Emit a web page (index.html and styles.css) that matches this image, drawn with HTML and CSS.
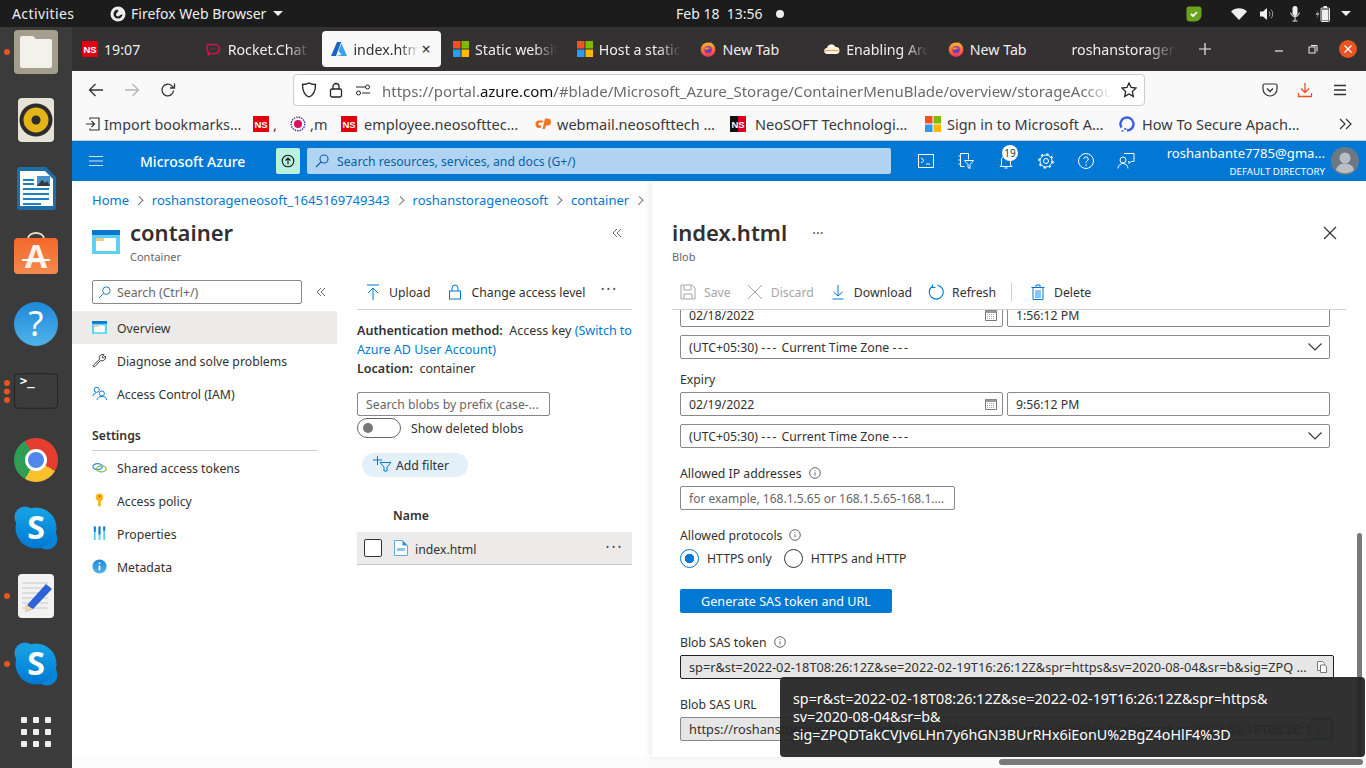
FILE: index.html
```html
<!DOCTYPE html>
<html>
<head>
  <meta charset="utf-8">
  <title>index.html - Microsoft Azure</title>
  <link rel="stylesheet" href="styles.css">
</head>
<body>
  <svg class="defs">
    <defs>
      <linearGradient id="fox" x1="0" y1="0" x2="0" y2="1"><stop offset="0" stop-color="#ffb52e"/><stop offset=".55" stop-color="#ff6a2f"/><stop offset="1" stop-color="#f0306e"/></linearGradient>
      <linearGradient id="skyblue" x1="0" y1="0" x2="0" y2="1"><stop offset="0" stop-color="#16a5e6"/><stop offset="1" stop-color="#0078d4"/></linearGradient>
      <linearGradient id="sky2" x1="0" y1="0" x2="0" y2="1"><stop offset="0" stop-color="#1e88d8"/><stop offset="1" stop-color="#50b4ea"/></linearGradient>
      <linearGradient id="store" x1="0" y1="0" x2="0" y2="1"><stop offset="0" stop-color="#f4672a"/><stop offset="1" stop-color="#f58a4e"/></linearGradient>
    </defs>
    <symbol id="ms" viewBox="0 0 16 16"><rect width="7.5" height="7.5" fill="#f25022"/><rect x="8.5" width="7.5" height="7.5" fill="#7fba00"/><rect y="8.5" width="7.5" height="7.5" fill="#2d9cf0"/><rect x="8.5" y="8.5" width="7.5" height="7.5" fill="#ffb900"/></symbol>
    <symbol id="firefox" viewBox="0 0 16 16"><circle cx="8" cy="8.700" r="7.300" fill="url(#fox)"/><path d="M9 .4c2.800 1.200 4.600 3.200 5.500 5.600-.8-1-2-1.800-3.200-2-.1-1.400-1-2.600-2.300-3.600z" fill="#ffa92e"/><circle cx="8.200" cy="8.600" r="3.700" fill="#6f3cc0"/><path d="M4.600 7.200c1.800-1.400 4.700-1.300 6.600.6-1.300-.4-2.800-.2-3.500.7-.7.700-2.200.6-3.100-1.300z" fill="#ff8a2f"/></symbol>
    <symbol id="ns" viewBox="0 0 16 16"><rect width="16" height="16" fill="#e3000f"/><text x="8" y="12" class="ns-text">NS</text></symbol>
    <symbol id="skype" viewBox="0 0 44 44"><circle cx="11" cy="11" r="10.500" fill="#1a9be0"/><circle cx="33" cy="33" r="10.500" fill="#0a84d6"/><circle cx="22" cy="22" r="20.500" fill="url(#skyblue)"/><text x="22" y="33" class="skype-text">S</text></symbol>
    <symbol id="info" viewBox="0 0 12 12"><circle cx="6" cy="6" r="5.300" fill="none" stroke="#666"/><path d="M6 5.300v3.200M6 3.200v1" stroke="#666"/></symbol>
    <symbol id="cal" viewBox="0 0 14 14"><path d="M1.500 2.500h11v10h-11z" fill="#fff" stroke="#777"/><path d="M1.500 2.500h11v2.500h-11z" fill="#999"/><path d="M3 6.500h8M3 8.500h8M3 10.500h8" stroke="#aaa" stroke-dasharray="1 1"/></symbol>
    <symbol id="chev" viewBox="0 0 16 10"><path d="M1.500 1.500 8 8l6.500-6.500" fill="none" stroke="#333" stroke-width="1.100"/></symbol>
    <symbol id="copy" viewBox="0 0 14 14"><path d="M2.500 1.500h5l2 2v7h-7z" fill="#fff" stroke="#777"/><path d="M5.500 5h4.500l1.500 1.500v6h-6z" fill="#fff" stroke="#777"/></symbol>
    <symbol id="pane" viewBox="0 0 28 24"><rect width="28" height="24" fill="#5ed0f2"/><rect width="28" height="5" fill="#0a78d0"/><rect x="4" y="8" width="20" height="13" fill="#fff"/><rect x="4" y="8" width="8" height="3" fill="#f7c77e"/></symbol>
  </svg>

  <header class="topbar">
    <div class="top-left">
      <span class="activities">Activities</span>
      <svg class="top-ff" viewBox="0 0 16 16"><circle cx="8" cy="8" r="7.500" fill="#eee"/><path d="M8 3.500a4.500 4.500 0 1 0 4.500 4.500c-1 1-3 1.500-4.500.5s-.5-3 1-3.500c-1-.5-2-.8-1-1.500z" fill="#1b1b1b"/><circle cx="8" cy="8.500" r="2" fill="#eee"/></svg>
      <span>Firefox Web Browser</span>
      <span class="caret"></span>
    </div>
    <div class="top-clock">
      <span>Feb 18&nbsp; 13:56</span>
      <span class="clock-dot"></span>
    </div>
    <div class="top-tray">
      <svg class="tray-shield" viewBox="0 0 16 16"><path d="M3 .5h10a2.500 2.500 0 0 1 2.500 2.500v6c0 3.500-3 6.500-6.500 6.500H4A3.500 3.500 0 0 1 .5 12V3A2.500 2.500 0 0 1 3 .5z" fill="#6aa31d"/><path d="M5 8l2.200 2L11 6" stroke="#fff" stroke-width="1.800" fill="none"/></svg>
      <svg class="tray-wifi" viewBox="0 0 16 12"><path d="M0 3.500C4.500-.8 11.500-.8 16 3.500L8 12z" fill="#eee"/></svg>
      <svg class="tray-sound" viewBox="0 0 15 14"><path d="M0 4.500h3L7 1v12L3 9.500H0z" fill="#eee"/><path d="M9 4.500a3.500 3.500 0 0 1 0 5M11 2.500a6.500 6.500 0 0 1 0 9" stroke="#999" fill="none"/></svg>
      <svg class="tray-mic" viewBox="0 0 10 16"><rect x="2.500" y="0" width="5" height="10" rx="2.500" fill="#eee"/><path d="M.8 6.500a4.200 4.200 0 0 0 8.400 0M5 11v3.500M2.500 15h5" stroke="#eee" fill="none"/></svg>
      <svg class="tray-batt" viewBox="0 0 15 16"><path d="M3 4 .5 9h2L1.500 13 4.500 7h-2z" fill="#999"/><rect x="6" y="2" width="8.500" height="13.500" rx="1" fill="none" stroke="#eee"/><rect x="8.500" y="0" width="3.500" height="2" fill="#eee"/><rect x="7" y="3.500" width="6.500" height="11" fill="#eee"/></svg>
      <span class="caret"></span>
    </div>
  </header>

  <div class="desktop">
    <nav class="dock">
      <div class="dock-slot"><span class="run-dot"></span>
        <svg class="dock-icon" viewBox="0 0 44 44"><rect width="44" height="44" rx="4" fill="#a39e8e"/><path d="M6 8a2 2 0 0 1 2-2h11l3 3h14a2 2 0 0 1 2 2v25a2 2 0 0 1-2 2H8a2 2 0 0 1-2-2z" fill="#f3f1ec"/></svg>
      </div>
      <div class="dock-slot">
        <svg class="dock-icon" viewBox="0 0 44 44"><rect x="4" width="36" height="44" rx="4" fill="#e6e2d4"/><circle cx="22" cy="22" r="16.500" fill="#2c2c30"/><circle cx="22" cy="22" r="12.500" fill="#e5b416"/><circle cx="22" cy="22" r="4.500" fill="#2c2c30"/></svg>
      </div>
      <div class="dock-slot">
        <svg class="dock-icon" viewBox="0 0 44 44"><path d="M3 4a3 3 0 0 1 3-3h26l10 10v30a3 3 0 0 1-3 3H6a3 3 0 0 1-3-3z" fill="#1b6ea8"/><path d="M6 5h25l8 8v27H6z" fill="#fff"/><path d="M9 14h11M9 18h11M9 23h26M9 28h26M9 33h26M9 38h18" stroke="#1b7fc0" stroke-width="2"/><rect x="23" y="10" width="13" height="10" fill="#4a90c8"/><path d="M23 20l5-6 3 3 2-2 3 5z" fill="#3a3a3a"/></svg>
      </div>
      <div class="dock-slot">
        <svg class="dock-icon dock-store" viewBox="0 0 44 44"><path d="M14 7C14 -1 30 -1 30 7" fill="none" stroke="#e8dcc0" stroke-width="2"/><rect y="6" width="44" height="36" rx="4" fill="url(#store)"/><text x="22" y="36" class="store-text">A</text><path d="M8 28h28" stroke="#fff" stroke-width="2"/></svg>
      </div>
      <div class="dock-slot">
        <svg class="dock-icon" viewBox="0 0 44 44"><circle cx="22" cy="22" r="22" fill="url(#sky2)"/><text x="22" y="34" class="help-text">?</text></svg>
      </div>
      <div class="dock-slot"><span class="run-dots"></span>
        <svg class="dock-icon" viewBox="0 0 46 44"><rect x=".5" y="3" width="45" height="36" rx="4" fill="#3c3c3c" stroke="#222"/><text x="6" y="15" class="term-text">&gt;_</text></svg>
      </div>
      <div class="dock-slot"><span class="chrome"><span class="chrome-eye"></span></span></div>
      <div class="dock-slot"><svg class="dock-icon"><use href="#skype"/></svg></div>
      <div class="dock-slot"><span class="run-dot"></span>
        <svg class="dock-icon" viewBox="0 0 44 44"><rect x="4" width="36" height="44" rx="4" fill="#f2f2f2"/><path d="M8 9h26M8 14h26M8 19h26M8 24h26M8 29h26M8 34h26" stroke="#c8c8c8"/><path d="M32 10l6 5-19 20-8 3 3-8z" fill="#2f62d8"/><path d="M11 30l8 5-8 3z" fill="#f3d3a8"/></svg>
      </div>
      <div class="dock-slot"><span class="run-dot"></span><svg class="dock-icon"><use href="#skype"/></svg></div>
      <div class="dock-slot">
        <div class="apps-grid">
          <i></i><i></i><i></i><i></i><i></i><i></i><i></i><i></i><i></i>
        </div>
      </div>
    </nav>

    <div class="browser">
      <div class="tabs">
        <div class="tab"><svg class="tab-icon"><use href="#ns"/></svg><span class="tab-label">19:07</span></div>
        <div class="tab"><svg class="tab-icon" viewBox="0 0 16 16"><path d="M2 3.500h7a4.500 4.500 0 0 1 0 9H4l-1.500 1.500V11C1 10 1 9 1 8s0-3 1-4.500z" fill="none" stroke="#d6114f" stroke-width="1.600"/><path d="M4.500 8h6" stroke="#d6114f" stroke-dasharray="1.500 1"/></svg><span class="tab-label tab-fade">Rocket.Chat</span></div>
        <div class="tab tab-active"><svg class="tab-icon" viewBox="0 0 16 16"><path d="M6 1h4.200L5 15H0z" fill="#1a63c6"/><path d="M10.500 2.500 16 15H5.500l5-1.500-3-3.500z" fill="#3ba1ec"/></svg><span class="tab-label tab-fade">index.html</span><span class="tab-close">×</span></div>
        <div class="tab"><svg class="tab-icon"><use href="#ms"/></svg><span class="tab-label tab-fade">Static website</span></div>
        <div class="tab"><svg class="tab-icon"><use href="#ms"/></svg><span class="tab-label tab-fade">Host a static</span></div>
        <div class="tab"><svg class="tab-icon"><use href="#firefox"/></svg><span class="tab-label">New Tab</span></div>
        <div class="tab"><svg class="tab-icon" viewBox="0 0 16 16"><path d="M3.500 13a3 3 0 0 1-.5-6 4.500 4.500 0 0 1 8.500-1 3.500 3.500 0 0 1 1 7z" fill="#fdf3e4"/><path d="M1 10c3-1 10-1 14 0" stroke="#f49b2a" fill="none"/></svg><span class="tab-label tab-fade">Enabling Arc</span></div>
        <div class="tab"><svg class="tab-icon"><use href="#firefox"/></svg><span class="tab-label">New Tab</span></div>
        <div class="tab tab-plain"><span class="tab-label tab-fade">roshanstorageneo</span></div>
        <svg class="new-tab" viewBox="0 0 12 12"><path d="M6 0v12M0 6h12" stroke="#eee" stroke-width="1.200"/></svg>
        <div class="win-controls">
          <svg class="win-btn" viewBox="0 0 10 10"><path d="M1 7h8" stroke="#eee" stroke-width="1.200"/></svg>
          <svg class="win-btn" viewBox="0 0 10 10"><rect x="1" y="3" width="6" height="6" fill="none" stroke="#eee"/><path d="M3 1.500h6v6" fill="none" stroke="#eee"/></svg>
          <svg class="win-close" viewBox="0 0 18 18"><circle cx="9" cy="9" r="9" fill="#e95420"/><path d="M5.500 5.500l7 7M12.500 5.500l-7 7" stroke="#fff" stroke-width="1.300"/></svg>
        </div>
      </div>

      <div class="navbar">
        <svg class="nav-btn" viewBox="0 0 16 16"><path d="M15 8H1.500M7.500 2 1.500 8l6 6" fill="none" stroke="#333" stroke-width="1.300"/></svg>
        <svg class="nav-btn" viewBox="0 0 16 16"><path d="M1 8h13.500M8.500 2l6 6-6 6" fill="none" stroke="#b5b5b5" stroke-width="1.300"/></svg>
        <svg class="nav-btn" viewBox="0 0 16 16"><path d="M13.500 8.500a5.800 5.800 0 1 1-1.700-4.600L14 6M14.500 1.500V6H10" fill="none" stroke="#333" stroke-width="1.300"/></svg>
        <div class="urlbar">
          <svg class="url-icon" viewBox="0 0 16 16"><path d="M8 1c2 1.300 4.500 1.500 6.500 1.500C14.500 9 12 13.500 8 15 4 13.500 1.500 9 1.500 2.500 3.500 2.500 6 2.300 8 1z" fill="none" stroke="#222" stroke-width="1.300"/></svg>
          <svg class="url-icon" viewBox="0 0 16 16"><rect x="2.500" y="7" width="11" height="8" rx="1.500" fill="none" stroke="#222" stroke-width="1.300"/><path d="M5 7V4.500a3 3 0 0 1 6 0V7" fill="none" stroke="#222" stroke-width="1.300"/></svg>
          <svg class="url-icon" viewBox="0 0 16 16"><circle cx="3.500" cy="11" r="2" fill="none" stroke="#222"/><circle cx="12.500" cy="5" r="2" fill="none" stroke="#222"/><path d="M1 5h9M7 11h8" stroke="#222" stroke-width="1.200"/></svg>
          <span class="url-text">https://portal.<b>azure.com</b>/#blade/Microsoft_Azure_Storage/ContainerMenuBlade/overview/storageAccounts</span>
          <svg class="url-star" viewBox="0 0 16 16"><path d="M8 1l2.100 4.500 4.900.6-3.600 3.400.9 4.900L8 12l-4.300 2.400.9-4.900L1 6.100l4.900-.6z" fill="none" stroke="#222" stroke-width="1.300"/></svg>
        </div>
        <div class="nav-right">
          <svg class="nav-tool" viewBox="0 0 16 16"><path d="M2.500 2h11A1.500 1.500 0 0 1 15 3.500V7a7 7 0 0 1-14 0V3.500A1.500 1.500 0 0 1 2.500 2z" fill="none" stroke="#333" stroke-width="1.200"/><path d="M5 6.500l3 3 3-3" fill="none" stroke="#333" stroke-width="1.300"/></svg>
          <svg class="nav-tool" viewBox="0 0 16 16"><path d="M8 1v9.500M4 6.500l4 4 4-4M1.500 11v3.500h13V11" fill="none" stroke="#e95420" stroke-width="1.300"/></svg>
          <svg class="nav-tool" viewBox="0 0 16 16"><path d="M2 3.500h12M2 8h12M2 12.500h12" stroke="#333" stroke-width="1.300"/></svg>
        </div>
      </div>

      <div class="bookmarks">
        <span class="bm bm-import"><svg class="bm-icon" viewBox="0 0 16 16"><path d="M5 3.500V2h9v12H5v-1.500M1 8h8M6.500 5l3 3-3 3" fill="none" stroke="#333" stroke-width="1.200"/></svg>Import bookmarks…</span>
        <span class="bm bm-ns1"><svg class="bm-icon"><use href="#ns"/></svg>,</span>
        <span class="bm bm-m"><svg class="bm-icon" viewBox="0 0 16 16"><circle cx="8" cy="8" r="6.800" fill="none" stroke="#3a2fa8" stroke-width="1.400" stroke-dasharray="1.500 1"/><circle cx="8" cy="8" r="4" fill="#d4145a"/></svg>,m</span>
        <span class="bm bm-emp"><svg class="bm-icon"><use href="#ns"/></svg><span class="bm-text">employee.neosofttec…</span></span>
        <span class="bm bm-web"><svg class="bm-icon" viewBox="0 0 16 16"><path d="M4.500 4.500h4l-1 2H5a1.500 1.500 0 0 0 0 3h1.500L5.500 12H4a3.700 3.700 0 0 1 .5-7.500zM10 2.500h2.500a3.500 3.500 0 0 1 0 7H11l-1.200 3.500H7.500z" fill="#f47320"/></svg><span class="bm-text">webmail.neosofttech …</span></span>
        <span class="bm bm-neo"><svg class="bm-icon" viewBox="0 0 16 16"><rect width="16" height="16" fill="#111"/><rect x="8" width="8" height="16" fill="#d8001a"/><text x="8" y="12" class="ns-text">NS</text></svg><span class="bm-text">NeoSOFT Technologi…</span></span>
        <span class="bm bm-sign"><svg class="bm-icon"><use href="#ms"/></svg><span class="bm-text">Sign in to Microsoft A…</span></span>
        <span class="bm bm-how"><svg class="bm-icon" viewBox="0 0 16 16"><path d="M2.500 11.500A6.500 6.500 0 1 1 8 14.500" fill="none" stroke="#3b5fe0" stroke-width="2.400"/><path d="M5 13h2.500M2.500 15h2" stroke="#3b5fe0" stroke-width="1.500"/></svg><span class="bm-text">How To Secure Apach…</span></span>
        <svg class="bm-more" viewBox="0 0 14 12"><path d="M1 1l5 5-5 5M7 1l5 5-5 5" fill="none" stroke="#333" stroke-width="1.200"/></svg>
      </div>

      <div class="azure-bar">
        <svg class="az-burger" viewBox="0 0 16 12"><path d="M1 1.500h14M1 6h14M1 10.500h14" stroke="#cfe4f6" stroke-width="1.200"/></svg>
        <span class="az-brand">Microsoft Azure</span>
        <span class="az-upgrade"><svg viewBox="0 0 14 14" class="az-up-icon"><circle cx="7" cy="7" r="5.800" fill="none" stroke="#111" stroke-width="1.100"/><path d="M7 10.500V4M4.500 6.500 7 4l2.500 2.500" fill="none" stroke="#111" stroke-width="1.100"/></svg></span>
        <div class="az-search">
          <svg class="az-search-icon" viewBox="0 0 14 14"><circle cx="9" cy="5" r="4" fill="none" stroke="#0b5ea8" stroke-width="1.100"/><path d="M6 8 1 13" stroke="#0b5ea8" stroke-width="1.100"/></svg>
          Search resources, services, and docs (G+/)
        </div>
        <div class="az-tools">
          <svg class="az-tool" viewBox="0 0 18 18"><rect x="1.500" y="2.500" width="15" height="13" fill="none" stroke="#fff"/><path d="M4 6l3 2.500L4 11M9 12h4" fill="none" stroke="#fff"/></svg>
          <svg class="az-tool" viewBox="0 0 18 18"><path d="M3.500 1.500h8v6M3.500 1.500v13h4M1.500 4h2M1.500 8h2M1.500 12h2" fill="none" stroke="#fff"/><path d="M7.500 8.500h9L13 12.500v4l-2-1v-3z" fill="none" stroke="#fff"/></svg>
          <span class="az-bell">
            <svg class="az-tool" viewBox="0 0 18 18"><path d="M4.500 13V8a4.500 4.500 0 0 1 9 0v5l1.500 1.500H3zM7.500 16h3" fill="none" stroke="#fff"/></svg>
            <span class="az-badge">19</span>
          </span>
          <svg class="az-tool" viewBox="0 0 18 18"><circle cx="9" cy="9" r="2.500" fill="none" stroke="#fff"/><circle cx="9" cy="9" r="6" fill="none" stroke="#fff"/><circle cx="9" cy="9" r="7" fill="none" stroke="#fff" stroke-width="1.600" stroke-dasharray="2.400 3.100"/></svg>
          <svg class="az-tool" viewBox="0 0 18 18"><circle cx="9" cy="9" r="7.500" fill="none" stroke="#fff"/><path d="M6.800 7a2.200 2.200 0 1 1 3.400 1.900c-.8.500-1.200 1-1.200 2" fill="none" stroke="#fff"/><circle cx="9" cy="13" r=".8" fill="#fff"/></svg>
          <svg class="az-tool" viewBox="0 0 18 18"><circle cx="6" cy="8" r="3" fill="none" stroke="#fff"/><path d="M1 16.500a5 5 0 0 1 10 0M7 1.500h10v8h-3l-2 2v-2h-1" fill="none" stroke="#fff"/></svg>
        </div>
        <div class="az-user">
          <span class="az-mail">roshanbante7785@gma...</span>
          <span class="az-dir">DEFAULT DIRECTORY</span>
        </div>
        <svg class="az-avatar" viewBox="0 0 28 28"><circle cx="14" cy="14" r="14" fill="#6d7883"/><circle cx="14" cy="11" r="5.500" fill="#b9bec4"/><path d="M5 23c1-5 5-6.500 9-6.500s8 1.500 9 6.500a14 14 0 0 1-18 0z" fill="#b9bec4"/></svg>
      </div>

      <div class="portal">
        <section class="blade-left">
          <div class="crumbs">
            <a>Home</a><span class="crumb-sep"></span>
            <a>roshanstorageneosoft_1645169749343</a><span class="crumb-sep"></span>
            <a>roshanstorageneosoft</a><span class="crumb-sep"></span>
            <a>container</a><span class="crumb-sep"></span>
          </div>
          <div class="blade-head">
            <svg class="head-icon"><use href="#pane"/></svg>
            <div class="head-titles">
              <h1>container</h1>
              <div class="head-sub">Container</div>
            </div>
            <svg class="collapse collapse-top" viewBox="0 0 10 10"><path d="M5 1 1 5l4 4M9 1 5 5l4 4" fill="none" stroke="#666"/></svg>
          </div>
          <div class="blade-body">
            <aside class="menu">
              <div class="menu-search-row">
                <div class="menu-search">
                  <svg class="menu-search-icon" viewBox="0 0 14 14"><circle cx="9" cy="5" r="4" fill="none" stroke="#0078d4"/><path d="M6 8 1 13" stroke="#0078d4"/></svg>
                  Search (Ctrl+/)
                </div>
                <svg class="collapse" viewBox="0 0 10 10"><path d="M5 1 1 5l4 4M9 1 5 5l4 4" fill="none" stroke="#666"/></svg>
              </div>
              <div class="menu-item menu-active"><svg class="menu-icon"><use href="#pane"/></svg><span>Overview</span></div>
              <div class="menu-item"><svg class="menu-icon" viewBox="0 0 16 16"><path d="M1.500 13 8 6.800A3.800 3.800 0 0 1 13 1.800L10.500 4.300l1.300 1.300 2.400-2.400a3.800 3.800 0 0 1-5.200 4.800L3 14.500a1 1 0 0 1-1.500-1.500z" fill="none" stroke="#333"/></svg><span>Diagnose and solve problems</span></div>
              <div class="menu-item"><svg class="menu-icon" viewBox="0 0 16 16"><circle cx="5" cy="4" r="2.700" fill="none" stroke="#0078d4"/><circle cx="10.500" cy="8" r="2.700" fill="none" stroke="#0078d4"/><path d="M1 11c0-2 1.500-3.500 3.500-3.500M5.500 15c0-2.500 2-4 5-4s5 1.500 5 4" fill="none" stroke="#0078d4"/></svg><span>Access Control (IAM)</span></div>
              <div class="menu-group">Settings</div>
              <div class="menu-item"><svg class="menu-icon" viewBox="0 0 16 16"><ellipse cx="6" cy="7" rx="5" ry="3.200" fill="none" stroke="#2f8fd6" stroke-width="1.300"/><ellipse cx="10" cy="9.500" rx="5" ry="3.200" fill="none" stroke="#7ab648" stroke-width="1.300"/></svg><span>Shared access tokens</span></div>
              <div class="menu-item"><svg class="menu-icon" viewBox="0 0 16 16"><circle cx="8" cy="4.500" r="4" fill="#fcb714"/><path d="M6.500 7h3v6l-1.500 2-1.500-2z" fill="#fcb714"/><circle cx="8" cy="3.500" r="1" fill="#a36d00"/></svg><span>Access policy</span></div>
              <div class="menu-item"><svg class="menu-icon" viewBox="0 0 16 16"><path d="M3 .5V15M8 .5V15M13 .5V15" stroke="#5ed0f2" stroke-width="2"/><path d="M3 .5V6M8 .5V9M13 .5V5" stroke="#0a78d0" stroke-width="2"/></svg><span>Properties</span></div>
              <div class="menu-item"><svg class="menu-icon" viewBox="0 0 16 16"><circle cx="8" cy="8" r="7.500" fill="url(#sky2)"/><path d="M8 7v5M8 3.800v1.500" stroke="#fff" stroke-width="1.800"/></svg><span>Metadata</span></div>
            </aside>
            <div class="blobs">
              <div class="toolbar blobs-toolbar">
                <span class="tool"><svg class="tool-icon" viewBox="0 0 16 16"><path d="M2 1h12M8 16V4M3 9l5-5 5 5" fill="none" stroke="#0078d4"/></svg>Upload</span>
                <span class="tool"><svg class="tool-icon" viewBox="0 0 16 16"><rect x="2.500" y="7" width="11" height="8" fill="none" stroke="#0078d4"/><path d="M5 7V4a3 3 0 0 1 6 0v3" fill="none" stroke="#0078d4"/></svg>Change access level</span>
                <span class="tool-dots">···</span>
              </div>
              <p class="auth"><b>Authentication method:</b>&nbsp; Access key <a>(Switch to<br>Azure AD User Account)</a><br><b>Location:</b>&nbsp; container</p>
              <div class="input blob-search"><span class="placeholder">Search blobs by prefix (case-...</span></div>
              <div class="toggle-row"><span class="toggle"><i></i></span>Show deleted blobs</div>
              <div class="filter-pill"><svg class="filter-icon" viewBox="0 0 18 16"><path d="M0 4h9M4.500 0v9" stroke="#0078d4"/><path d="M7 6.500h11l-4 4.500v4h-3v-4z" fill="none" stroke="#0078d4"/></svg>Add filter</div>
              <div class="blob-head">Name</div>
              <div class="blob-row">
                <span class="check"></span>
                <svg class="file-icon" viewBox="0 0 14 16"><path d="M.5.500h8l5 5v10H.5z" fill="#fff" stroke="#5ea9e6"/><path d="M8.500.500v5h5z" fill="#2f8fd6"/><path d="M3 8h8v3H3z" fill="#8ac4f0"/></svg>
                <span class="file-name">index.html</span>
                <span class="row-dots">•••</span>
              </div>
            </div>
          </div>
        </section>

        <section class="blade-right">
          <div class="detail-head">
            <div class="head-titles">
              <div class="title-row"><h1>index.html</h1><span class="title-dots">···</span></div>
              <div class="head-sub">Blob</div>
            </div>
            <svg class="close-x" viewBox="0 0 14 14"><path d="M1 1l12 12M13 1 1 13" stroke="#333" stroke-width="1.200"/></svg>
          </div>
          <div class="toolbar detail-toolbar">
            <span class="tool tool-off"><svg class="tool-icon" viewBox="0 0 16 16"><path d="M1 1h11l3 3v11H1zM4 1v5h7V1M4 15v-5h8v5" fill="none" stroke="#a6a6a6"/></svg>Save</span>
            <span class="tool tool-off"><svg class="tool-icon" viewBox="0 0 16 16"><path d="M1 1l14 14M15 1 1 15" stroke="#a6a6a6"/></svg>Discard</span>
            <span class="tool"><svg class="tool-icon" viewBox="0 0 16 16"><path d="M8 1v11M3.500 8 8 12l4.500-4M2.500 15h11" fill="none" stroke="#0078d4"/></svg>Download</span>
            <span class="tool"><svg class="tool-icon" viewBox="0 0 16 16"><path d="M9.500 1.200A7 7 0 1 1 4 2.500M4.500 .5v3h3" fill="none" stroke="#0078d4" stroke-width="1.100"/></svg>Refresh</span>
            <span class="tool-sep"></span>
            <span class="tool"><svg class="tool-icon" viewBox="0 0 16 16"><path d="M3 3.500h10v12H3zM1.500 3.500h13M6 3.500V1h4v2.500" fill="none" stroke="#0078d4"/><rect x="5" y="6" width="6" height="8" fill="#8ac4f0"/></svg>Delete</span>
          </div>
          <div class="sas-form">
            <div class="date-row date-row-cut">
              <div class="input date-input">02/18/2022<svg class="cal-icon"><use href="#cal"/></svg></div>
              <div class="input time-input">1:56:12 PM</div>
            </div>
            <div class="input select"><span>(UTC+05:30) <span class="dashes">---</span> Current Time Zone <span class="dashes">---</span></span><svg class="chev-icon"><use href="#chev"/></svg></div>

            <div class="label label-expiry">Expiry</div>
            <div class="date-row">
              <div class="input date-input">02/19/2022<svg class="cal-icon"><use href="#cal"/></svg></div>
              <div class="input time-input">9:56:12 PM</div>
            </div>
            <div class="input select"><span>(UTC+05:30) <span class="dashes">---</span> Current Time Zone <span class="dashes">---</span></span><svg class="chev-icon"><use href="#chev"/></svg></div>

            <div class="label label-ip">Allowed IP addresses <svg class="info-icon"><use href="#info"/></svg></div>
            <div class="input ip-input"><span class="placeholder">for example, 168.1.5.65 or 168.1.5.65-168.1....</span></div>

            <div class="label label-proto">Allowed protocols <svg class="info-icon"><use href="#info"/></svg></div>
            <div class="radios">
              <span class="radio radio-on"></span><span class="radio-text">HTTPS only</span>
              <span class="radio"></span><span class="radio-text">HTTPS and HTTP</span>
            </div>

            <div class="primary-btn">Generate SAS token and URL</div>

            <div class="label label-token">Blob SAS token <svg class="info-icon"><use href="#info"/></svg></div>
            <div class="input readonly token-input"><span class="readonly-text">sp=r&amp;st=2022-02-18T08:26:12Z&amp;se=2022-02-19T16:26:12Z&amp;spr=https&amp;sv=2020-08-04&amp;sr=b&amp;sig=ZPQ ...</span><svg class="copy-icon"><use href="#copy"/></svg></div>

            <div class="label label-url">Blob SAS URL</div>
            <div class="input readonly url-input"><span class="readonly-text">https://roshanstorageneosoft.blob.core.windows.net/container/index.html?sp=r&amp;st=2022-02-18T08:26:12 ...</span><span class="copy-box"><svg class="copy-icon"><use href="#copy"/></svg></span></div>
          </div>
          <div class="scroll-v"></div>
        </section>
      </div>

      <div class="tooltip">sp=r&amp;st=2022-02-18T08:26:12Z&amp;se=2022-02-19T16:26:12Z&amp;spr=https&amp;<br>sv=2020-08-04&amp;sr=b&amp;<br>sig=ZPQDTakCVJv6LHn7y6hGN3BUrRHx6iEonU%2BgZ4oHlF4%3D</div>
      <div class="scroll-h"></div>
    </div>
  </div>
</body>
</html>
```

FILE: styles.css
```css
* {
  box-sizing: border-box;
}

html, body {
  margin: 0;
  height: 768px;
  overflow: hidden;
}

body {
  width: 1366px;
  font-family: "Noto Sans", sans-serif;
  font-size: 12.25px;
  color: #323130;
  background: #fff;
}

svg {
  display: block;
  flex: none;
}

.defs {
  position: absolute;
  width: 0;
  height: 0;
}

.ns-text {
  font: 700 9.5px "Liberation Sans", sans-serif;
  fill: #fff;
  text-anchor: middle;
}

.skype-text {
  font: 700 32px "Noto Sans", sans-serif;
  fill: #fff;
  text-anchor: middle;
}

.store-text {
  font: 700 32px "Noto Sans", sans-serif;
  fill: #fdf3ea;
  text-anchor: middle;
}

.help-text {
  font: 400 34px "Noto Sans", sans-serif;
  fill: #fff;
  text-anchor: middle;
}

.term-text {
  font: 700 13px "DejaVu Sans Mono", monospace;
  fill: #fff;
}

/* top bar */
.topbar {
  height: 27px;
  background: #1c1c1c;
  color: #eee;
  display: flex;
  align-items: center;
  font-size: 14px;
}

.top-left {
  width: 676px;
  display: flex;
  align-items: center;
  padding-left: 12px;
}

.activities {
  width: 98px;
  letter-spacing: .4px;
}

.top-ff {
  width: 16px;
  height: 16px;
  margin-right: 5px;
}

.caret {
  width: 0;
  height: 0;
  border: 5px solid transparent;
  border-top: 5px solid #eee;
  border-bottom: 0;
  margin-left: 7px;
}

.top-clock {
  display: flex;
  align-items: center;
  width: 510px;
}

.clock-dot {
  width: 8px;
  height: 8px;
  border-radius: 50%;
  background: #eee;
  margin-left: 13px;
}

.top-tray {
  display: flex;
  align-items: center;
}

.tray-shield {
  width: 16px;
  height: 16px;
  margin-right: 29px;
}

.tray-wifi {
  width: 16px;
  height: 12px;
  margin-right: 13px;
}

.tray-sound {
  width: 15px;
  height: 14px;
  margin-right: 15px;
}

.tray-mic {
  width: 10px;
  height: 16px;
  margin-right: 15px;
}

.tray-batt {
  width: 15px;
  height: 16px;
}

.top-tray .caret {
  margin-left: 11px;
}

/* desktop */
.desktop {
  display: flex;
  height: 741px;
}

.dock {
  flex: none;
  width: 72px;
  background: #3b3b3b;
  display: flex;
  flex-direction: column;
}

.dock-slot {
  height: 68px;
  display: flex;
  align-items: center;
  justify-content: center;
  position: relative;
  flex: none;
}

.dock-slot:first-child {
  margin-top: -9px;
}

.dock-icon {
  width: 44px;
  height: 44px;
}

.dock-store {
  margin-top: -4px;
}

.run-dot {
  position: absolute;
  left: 4px;
  top: 31px;
  width: 6px;
  height: 6px;
  border-radius: 50%;
  background: #e95420;
}

.run-dots {
  position: absolute;
  left: 4px;
  top: 22px;
  width: 6px;
  height: 6px;
  border-radius: 50%;
  background: #e95420;
  box-shadow: 0 8.5px 0 #e95420, 0 17px 0 #e95420;
}

.chrome {
  width: 44px;
  height: 44px;
  border-radius: 50%;
  background: conic-gradient(#e53e30 0 120deg, #fbc02d 120deg 210deg, #2e9e54 210deg 330deg, #e53e30 330deg);
  display: flex;
  align-items: center;
  justify-content: center;
}

.chrome-eye {
  width: 22px;
  height: 22px;
  border-radius: 50%;
  background: #4f86ec;
  border: 3px solid #fff;
}

.apps-grid {
  display: grid;
  grid-template-columns: repeat(3, 6px);
  gap: 6px;
}

.apps-grid i {
  height: 6px;
  border-radius: 1px;
  background: #eee;
}

/* browser chrome */
.browser {
  flex: 1;
  min-width: 0;
  display: flex;
  flex-direction: column;
  position: relative;
}

.tabs {
  height: 44px;
  flex: none;
  background: #333132;
  display: flex;
  align-items: center;
  padding-left: 1px;
  color: #eee;
  font-size: 14.2px;
}

.tab {
  flex: none;
  width: 123.7px;
  height: 36px;
  padding-left: 9px;
  display: flex;
  align-items: center;
  gap: 6px;
}

.tab-icon {
  width: 16px;
  height: 16px;
}

.tab-label {
  white-space: nowrap;
  overflow: hidden;
}

.tab-fade {
  width: 82px;
  -webkit-mask-image: linear-gradient(90deg, #000 72%, transparent);
  mask-image: linear-gradient(90deg, #000 72%, transparent);
}

.tab-active {
  width: 119px;
  margin: 0 2.7px 0 2px;
  background: #f9f9fa;
  color: #333;
  border-radius: 4px;
}

.tab-active .tab-fade {
  width: 66px;
}

.tab-close {
  font-size: 16px;
  margin-left: -4px;
}

.tab-plain .tab-fade {
  width: 104px;
}

.new-tab {
  width: 12px;
  height: 12px;
  margin-left: 13px;
}

.win-controls {
  margin-left: auto;
  display: flex;
  align-items: center;
  padding-right: 9px;
}

.win-btn {
  width: 10px;
  height: 10px;
  margin-right: 24px;
}

.win-btn + .win-btn {
  margin-right: 21px;
}

.win-close {
  width: 18px;
  height: 18px;
}

.navbar {
  height: 37px;
  flex: none;
  background: #f9f9fa;
  display: flex;
  align-items: center;
  padding-left: 16px;
}

.nav-btn {
  width: 16px;
  height: 16px;
  margin-right: 20px;
}

.urlbar {
  margin-left: 97px;
  width: 852px;
  height: 32px;
  background: #fff;
  border: 1px solid #ccc;
  border-radius: 4px;
  display: flex;
  align-items: center;
  padding-left: 7px;
  flex: none;
}

.url-icon {
  width: 16px;
  height: 16px;
  margin-right: 11px;
}

.url-text {
  width: 730px;
  margin-top: 2px;
  overflow: hidden;
  white-space: nowrap;
  font-size: 15px;
  color: #6a6a6a;
  -webkit-mask-image: linear-gradient(90deg, #000 96%, transparent);
  mask-image: linear-gradient(90deg, #000 96%, transparent);
}

.url-text b {
  font-weight: 400;
  color: #111;
}

.url-star {
  width: 16px;
  height: 16px;
  margin-left: 9px;
}

.nav-right {
  display: flex;
  align-items: center;
  margin-left: 117px;
  gap: 19px;
}

.nav-tool {
  width: 16px;
  height: 16px;
}

.bookmarks {
  height: 33px;
  flex: none;
  background: #f9f9fa;
  border-bottom: 1px solid #ccc;
  display: flex;
  align-items: center;
  padding-left: 13px;
  font-size: 14.5px;
  color: #3a3a3a;
}

.bm {
  display: flex;
  align-items: center;
  flex: none;
  gap: 7px;
  white-space: nowrap;
  overflow: hidden;
}

.bm-icon {
  width: 16px;
  height: 16px;
}

.bm-import {
  width: 168px;
  gap: 3px;
  font-size: 14.3px;
}

.bm-ns1 {
  width: 37px;
  gap: 4px;
}

.bm-m {
  width: 51px;
  gap: 4px;
}

.bm-emp {
  width: 194px;
}

.bm-web {
  width: 195px;
  gap: 6px;
}

.bm-neo {
  width: 195px;
  gap: 9px;
}

.bm-sign {
  width: 194px;
  gap: 6px;
}

.bm-how {
  width: 220px;
  gap: 7px;
}

.bm-more {
  width: 14px;
  height: 12px;
}

/* azure top bar */
.azure-bar {
  height: 40px;
  flex: none;
  background: #0078d4;
  color: #fff;
  display: flex;
  align-items: center;
  padding-left: 16px;
}

.az-burger {
  width: 16px;
  height: 12px;
}

.az-brand {
  margin-left: 36px;
  width: 136px;
  font-size: 14px;
  font-weight: 500;
}

.az-upgrade {
  width: 24px;
  height: 26px;
  background: #b9f3e0;
  border-radius: 2px;
  display: flex;
  align-items: center;
  justify-content: center;
}

.az-up-icon {
  width: 14px;
  height: 14px;
}

.az-search {
  margin-left: 7px;
  width: 584px;
  height: 26px;
  background: #b0d4f1;
  border-radius: 2px;
  color: #0b5ea8;
  display: flex;
  align-items: center;
  padding-left: 8px;
  gap: 8px;
  font-size: 12.2px;
}

.az-search-icon {
  width: 14px;
  height: 14px;
}

.az-tools {
  display: flex;
  align-items: center;
  margin-left: 15px;
  width: 260px;
}

.az-tool {
  width: 18px;
  height: 18px;
  margin: 0 11px;
}

.az-bell {
  position: relative;
  display: block;
}

.az-badge {
  position: absolute;
  left: 16px;
  top: -7px;
  width: 16px;
  height: 16px;
  border-radius: 50%;
  background: #fff;
  color: #333;
  font-size: 10px;
  line-height: 16px;
  text-align: center;
}

.az-user {
  width: 160px;
  margin-left: -1px;
  padding-top: 2px;
  display: flex;
  flex-direction: column;
  align-items: flex-end;
  white-space: nowrap;
}

.az-mail {
  font-size: 13.1px;
  line-height: 17px;
}

.az-dir {
  font-size: 9.7px;
  line-height: 15px;
  margin-top: 2px;
}

.az-avatar {
  width: 28px;
  height: 28px;
  margin-left: 6px;
}

/* portal */
.portal {
  flex: 1;
  min-height: 0;
  display: flex;
  background: #fbfbfb;
}

.blade-left {
  flex: none;
  width: 580px;
  height: 576px;
  background: #fff;
}

.crumbs {
  height: 38px;
  display: flex;
  align-items: center;
  padding-left: 20px;
  color: #0078d4;
  font-size: 13px;
  white-space: nowrap;
  width: 580px;
}

.crumb-sep {
  width: 7px;
  height: 7px;
  border-top: 1px solid #777;
  border-right: 1px solid #777;
  transform: rotate(45deg);
  margin: 0 10px 0 7px;
}

.blade-head {
  height: 61px;
  padding-left: 20px;
  display: flex;
  position: relative;
}

.head-icon {
  width: 28px;
  height: 24px;
  margin: 11px 10px 0 0;
}

.head-titles {
  margin-top: -1px;
}

h1 {
  margin: 0;
  font-size: 22px;
  font-weight: 600;
  line-height: 28px;
  color: #323130;
}

.head-sub {
  font-size: 11px;
  color: #666;
  margin-top: 3px;
  line-height: 16px;
}

.collapse {
  width: 10px;
  height: 10px;
}

.collapse-top {
  position: absolute;
  left: 540px;
  top: 9px;
}

.blade-body {
  display: flex;
}

.menu {
  width: 265px;
  flex: none;
}

.menu-search-row {
  display: flex;
  align-items: center;
  padding-left: 20px;
  height: 24px;
  margin-bottom: 7px;
}

.menu-search {
  width: 210px;
  height: 24px;
  border: 1px solid #8a8886;
  border-radius: 2px;
  display: flex;
  align-items: center;
  padding-left: 5px;
  gap: 6px;
  color: #666;
}

.menu-search-icon {
  width: 13px;
  height: 13px;
}

.menu-search-row .collapse {
  margin-left: 14px;
}

.menu-item {
  height: 33px;
  display: flex;
  align-items: center;
  padding-left: 20px;
  gap: 10px;
}

.menu-item span {
  padding-top: 2px;
}

.menu-active {
  background: #edebe9;
}

.menu-icon {
  width: 15px;
  height: 15px;
}

.menu-group {
  margin: 16px 20px 0;
  height: 25px;
  line-height: 16px;
  padding-top: 2px;
  font-weight: 600;
  border-bottom: 1px solid #ccc;
}

.blobs {
  width: 275px;
  margin-left: 20px;
  flex: none;
}

.toolbar {
  height: 30px;
  border-bottom: 1px solid #d2d0ce;
  display: flex;
  align-items: center;
  padding-bottom: 5px;
}

.blobs-toolbar {
  padding-left: 8px;
}

.tool {
  display: flex;
  align-items: center;
  gap: 8px;
  white-space: nowrap;
  margin-right: 16px;
}

.blobs-toolbar .tool {
  margin-right: 17px;
}

.tool-icon {
  width: 16px;
  height: 16px;
}

.tool-off {
  color: #a6a6a6;
}

.tool-dots {
  font-size: 16px;
  letter-spacing: 1.5px;
  line-height: 14px;
  margin: -6px 0 0 -2px;
  color: #555;
}

.tool-sep {
  width: 1px;
  height: 18px;
  background: #ccc;
  margin: 0 18px 0 -1px;
}

.auth {
  margin: 11px 0 0;
  line-height: 19px;
  font-size: 12.5px;
  white-space: nowrap;
}

.auth b {
  font-weight: 600;
}

.auth a {
  color: #0078d4;
}

.input {
  border: 1px solid #8a8886;
  border-radius: 2px;
  height: 24px;
  display: flex;
  align-items: center;
  padding-left: 8px;
  white-space: nowrap;
  overflow: hidden;
}

.placeholder {
  color: #666;
}

.blob-search {
  width: 193px;
  margin-top: 14px;
}

.toggle-row {
  display: flex;
  align-items: center;
  gap: 10px;
  margin-top: 2px;
  height: 20px;
}

.toggle {
  width: 44px;
  height: 20px;
  border: 1px solid #666;
  border-radius: 10px;
  display: flex;
  align-items: center;
  padding-left: 5px;
}

.toggle i {
  width: 10px;
  height: 10px;
  border-radius: 50%;
  background: #777;
}

.filter-pill {
  margin: 15px 0 0 5px;
  width: 106px;
  height: 24px;
  border-radius: 12px;
  background: #e3f0fa;
  display: flex;
  align-items: center;
  padding-left: 11px;
  gap: 5px;
}

.filter-icon {
  width: 18px;
  height: 16px;
  margin-top: -3px;
}

.blob-head {
  margin-top: 23px;
  height: 32px;
  padding-left: 36px;
  font-weight: 600;
  line-height: 32px;
}

.blob-row {
  height: 33px;
  background: #edebe9;
  border-bottom: 1px solid #c8c6c4;
  display: flex;
  align-items: center;
  padding-left: 7px;
}

.check {
  width: 18px;
  height: 18px;
  border: 1px solid #333;
  border-radius: 2px;
  background: #fff;
}

.file-icon {
  width: 14px;
  height: 16px;
  margin-left: 12px;
}

.file-name {
  margin-left: 7px;
  padding-top: 2px;
}

.row-dots {
  margin-left: auto;
  margin-right: 8px;
  font-size: 8px;
  letter-spacing: 3px;
  margin-top: -4px;
  color: #444;
}

/* detail blade */
.blade-right {
  flex: 1;
  min-width: 0;
  position: relative;
  background: #fff;
  box-shadow: -3px 0 6px rgba(0, 0, 0, .07);
  height: 576px;
  padding-top: 38px;
}

.detail-head {
  height: 61px;
  padding: 0 29px 0 20px;
  display: flex;
  justify-content: space-between;
  align-items: flex-start;
}

.title-row {
  display: flex;
  align-items: center;
}

.title-dots {
  margin-left: 25px;
  font-size: 14px;
  color: #555;
}

.close-x {
  width: 14px;
  height: 14px;
  margin-top: 7px;
}

.detail-toolbar {
  margin: 0 20px;
  padding-left: 8px;
}

.sas-form {
  height: 447px;
  overflow: hidden;
  padding: 0 36px 0 28px;
}

.date-row {
  display: flex;
  gap: 4px;
}

.date-row-cut {
  margin-top: -7px;
}

.date-input {
  width: 323px;
  flex: none;
  justify-content: space-between;
  padding-right: 4px;
}

.time-input {
  flex: 1;
}

.cal-icon {
  width: 14px;
  height: 14px;
}

.select {
  margin-top: 8px;
  justify-content: space-between;
  padding-right: 6px;
}

.dashes {
  letter-spacing: 1.8px;
}

.chev-icon {
  width: 16px;
  height: 10px;
}

.label {
  display: flex;
  align-items: center;
  gap: 7px;
  height: 18px;
}

.label-expiry {
  margin-top: 11px;
  margin-bottom: 4px;
}

.label-ip {
  margin-top: 16px;
  margin-bottom: 4px;
}

.label-proto {
  margin-top: 16px;
}

.label-token {
  margin-top: 20px;
  margin-bottom: 4px;
}

.label-url {
  margin-top: 16px;
  margin-bottom: 4px;
}

.info-icon {
  width: 12px;
  height: 12px;
}

.ip-input {
  width: 275px;
  font-size: 12px;
}

.radios {
  margin-top: 4px;
  height: 20px;
  display: flex;
  align-items: center;
}

.radio {
  width: 19px;
  height: 19px;
  border: 1px solid #333;
  border-radius: 50%;
}

.radio-on {
  border-color: #0078d4;
  background: radial-gradient(circle, #0078d4 0 4.500px, #fff 5px);
}

.radio-text {
  margin: 0 12px 0 8px;
}

.primary-btn {
  margin-top: 21px;
  width: 212px;
  height: 24px;
  background: #0078d4;
  color: #fff;
  border-radius: 2px;
  display: flex;
  align-items: center;
  justify-content: center;
  font-size: 12.6px;
}

.readonly {
  background: #e6e6e6;
  margin-right: -4px;
  justify-content: space-between;
  padding-right: 4px;
  font-size: 12.75px;
}

.token-input {
  border-color: #222;
}

.url-input {
  border-color: #8a8886;
}

.readonly-text {
  overflow: hidden;
  white-space: nowrap;
}

.copy-icon {
  width: 14px;
  height: 14px;
}

.copy-box {
  margin-right: -3px;
  padding: 2px 3px;
  border: 1px solid #0078d4;
}

.scroll-v {
  position: absolute;
  right: 4px;
  top: 352px;
  width: 5px;
  height: 224px;
  background: #7a7a7a;
  border-radius: 3px;
}

.tooltip {
  position: absolute;
  left: 708px;
  top: 650px;
  width: 585px;
  height: 80px;
  padding: 13px;
  background: rgba(38, 38, 38, .95);
  color: #fff;
  border-radius: 4px;
  font-size: 14.3px;
  line-height: 18px;
}

.scroll-h {
  position: absolute;
  left: 927px;
  top: 732px;
  width: 364px;
  height: 6px;
  background: #7a7a7a;
  border-radius: 3px;
}
```
